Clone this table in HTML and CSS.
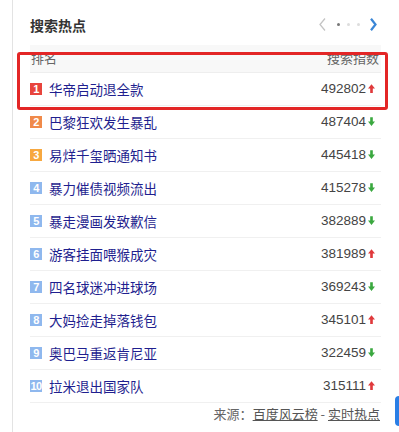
FILE: index.html
```html
<!DOCTYPE html>
<html lang="zh">
<head>
<meta charset="utf-8">
<link rel="stylesheet" href="styles.css">
</head>
<body>
<div class="panel">
  <div class="top">
    <h2 class="title">搜索热点</h2>
    <div class="pager">
      <svg class="prev" viewBox="0 0 7 13"><polyline points="6,0.5 1,6.5 6,12.5"/></svg>
      <span class="dot on"></span><span class="dot"></span><span class="dot"></span>
      <svg class="next" viewBox="0 0 7 13"><polyline points="1,0.8 5.5,6.5 1,12.2"/></svg>
    </div>
  </div>
  <div class="thead"><span>排名</span><span>搜索指数</span></div>
  <ul class="list">
    <li><span class="rk r1">1</span><span class="name">华帝启动退全款</span><span class="num">492802</span><svg class="ar up" viewBox="0 0 8 10"><path d="M4 0L8 5H5.5V10H2.5V5H0Z"/></svg></li>
    <li><span class="rk r2">2</span><span class="name">巴黎狂欢发生暴乱</span><span class="num">487404</span><svg class="ar down" viewBox="0 0 8 10"><path d="M4 10L8 5H5.5V0H2.5V5H0Z"/></svg></li>
    <li><span class="rk r3">3</span><span class="name">易烊千玺晒通知书</span><span class="num">445418</span><svg class="ar down" viewBox="0 0 8 10"><path d="M4 10L8 5H5.5V0H2.5V5H0Z"/></svg></li>
    <li><span class="rk">4</span><span class="name">暴力催债视频流出</span><span class="num">415278</span><svg class="ar down" viewBox="0 0 8 10"><path d="M4 10L8 5H5.5V0H2.5V5H0Z"/></svg></li>
    <li><span class="rk">5</span><span class="name">暴走漫画发致歉信</span><span class="num">382889</span><svg class="ar down" viewBox="0 0 8 10"><path d="M4 10L8 5H5.5V0H2.5V5H0Z"/></svg></li>
    <li><span class="rk">6</span><span class="name">游客挂面喂猴成灾</span><span class="num">381989</span><svg class="ar up" viewBox="0 0 8 10"><path d="M4 0L8 5H5.5V10H2.5V5H0Z"/></svg></li>
    <li><span class="rk">7</span><span class="name">四名球迷冲进球场</span><span class="num">369243</span><svg class="ar down" viewBox="0 0 8 10"><path d="M4 10L8 5H5.5V0H2.5V5H0Z"/></svg></li>
    <li><span class="rk">8</span><span class="name">大妈捡走掉落钱包</span><span class="num">345101</span><svg class="ar up" viewBox="0 0 8 10"><path d="M4 0L8 5H5.5V10H2.5V5H0Z"/></svg></li>
    <li><span class="rk">9</span><span class="name">奥巴马重返肯尼亚</span><span class="num">322459</span><svg class="ar down" viewBox="0 0 8 10"><path d="M4 10L8 5H5.5V0H2.5V5H0Z"/></svg></li>
    <li><span class="rk">10</span><span class="name">拉米退出国家队</span><span class="num">315111</span><svg class="ar up" viewBox="0 0 8 10"><path d="M4 0L8 5H5.5V10H2.5V5H0Z"/></svg></li>
  </ul>
  <div class="foot">来源：<a>百度风云榜</a> - <a>实时热点</a></div>
</div>
<div class="highlight"></div>
<div class="fab"></div>
</body>
</html>
```
FILE: styles.css
```css
html, body {
  margin: 0;
  padding: 0;
  background: #fff;
  overflow: hidden;
}
body {
  width: 399px;
  height: 432px;
  position: relative;
  font-family: "Noto Sans CJK SC", "Liberation Sans", sans-serif;
  color: #333;
}
.panel {
  margin-left: 12px;
  border-left: 1px solid #e3e3e3;
  padding-left: 17px;
  width: 351px;
  height: 432px;
  box-sizing: content-box;
}
.top {
  display: flex;
  align-items: center;
  justify-content: space-between;
  height: 45px;
  padding-top: 4px;
  box-sizing: border-box;
}
.title {
  margin: 0;
  font-size: 14px;
  font-weight: 600;
  color: #333;
  line-height: 20px;
}
.pager {
  display: flex;
  align-items: center;
  margin-right: 4px;
}
.prev, .next {
  width: 7px;
  height: 13px;
  fill: none;
}
.prev { stroke: #c4c4c4; stroke-width: 1.3; margin-right: 7px; }
.next { stroke: #3a86d6; stroke-width: 2.2; margin-left: 7px; }
.dot {
  width: 3px;
  height: 3px;
  border-radius: 50%;
  background: #ddd;
  margin: 0 3.5px;
}
.dot.on { background: #777; }
.thead {
  display: flex;
  justify-content: space-between;
  align-items: center;
  height: 28px;
  background: #f8f8f8;
  color: #666;
  font-size: 13px;
  padding: 0 2px 2px 1px;
  border-bottom: 1px solid #eee;
  box-sizing: border-box;
}
.list {
  list-style: none;
  margin: 0;
  padding: 0;
}
.list li {
  display: flex;
  align-items: center;
  height: 33px;
  border-bottom: 1px solid #f0f0f0;
  box-sizing: border-box;
  padding-right: 6px;
  padding-bottom: 1px;
}
.rk {
  width: 12px;
  height: 12px;
  background: #8fb8ee;
  color: #fff;
  font-family: "Liberation Sans", sans-serif;
  font-size: 11px;
  font-weight: bold;
  line-height: 12px;
  text-align: center;
  margin-right: 7px;
  letter-spacing: -0.5px;
}
.rk.r1 { background: #e8443d; }
.rk.r2 { background: #f08a4a; }
.rk.r3 { background: #f7a840; }
.name {
  flex: 1;
  color: #1f1f8f;
  font-size: 13.5px;
  line-height: 20px;
}
.num {
  font-family: "Liberation Sans", sans-serif;
  font-size: 13.5px;
  color: #444;
}
.ar {
  width: 7px;
  height: 9px;
  margin-left: 2px;
}
.ar.up { fill: #e0393b; }
.ar.down { fill: #3aa83f; }
.foot {
  text-align: right;
  font-size: 13px;
  color: #666;
  padding-top: 1px;
  padding-right: 1px;
  line-height: 20px;
}
.foot a {
  color: #555;
  text-decoration: underline;
}
.highlight {
  position: absolute;
  left: 17px;
  top: 52px;
  width: 371px;
  height: 58px;
  border: 3px solid #e32626;
  border-radius: 3px;
  box-sizing: border-box;
}
.fab {
  position: absolute;
  left: 395px;
  top: 396px;
  width: 4px;
  height: 30px;
  border-radius: 15px 0 0 15px / 15px 0 0 15px;
  background: #2a7fe6;
}
```
